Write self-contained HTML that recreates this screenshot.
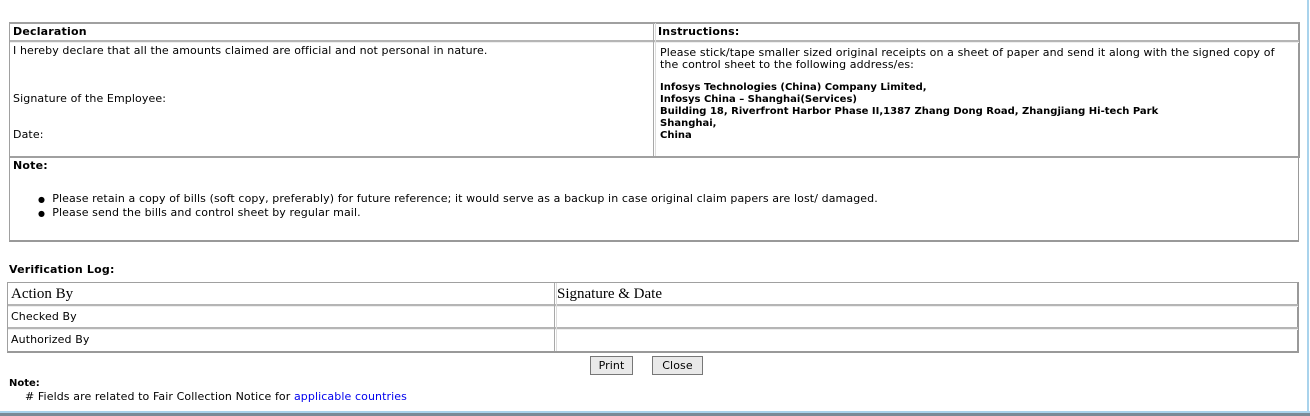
<!DOCTYPE html>
<html><head><style>
body{margin:0;width:1310px;height:416px;background:#fff;position:relative;overflow:hidden;font-family:"DejaVu Sans","Liberation Sans",sans-serif;font-size:11px;letter-spacing:0.1px;color:#000}
.a{position:absolute;white-space:nowrap}
.box{position:absolute;border:1px solid #a0a0a0;border-right-color:#999;border-bottom-color:#999;box-sizing:border-box}
.hl{position:absolute;height:2px;background:#b5b5b5;border-bottom:1px solid #eee}
.vl{position:absolute;width:1px;background:#a8a8a8}
.bd{font-weight:bold;font-size:10px;letter-spacing:0}
.btn{position:absolute;border:1px solid #777;background:#e9e9e9;box-sizing:border-box;text-align:center;line-height:17px;font-size:11px}
.serif{font-family:"Liberation Serif",serif;font-size:15px;letter-spacing:0}
.h{font-weight:bold;font-size:11px;letter-spacing:0.2px}
</style></head><body>
<div class="box" style="left:9px;top:22px;width:1291px;height:136px;border-width:2px 2px 1px 1px"></div>
<div class="hl" style="left:10px;top:40px;width:1289px"></div>
<div class="vl" style="left:653px;top:23px;height:133px"></div>
<div class="vl" style="left:655px;top:23px;height:133px;background:#ddd"></div>
<div class="a h" style="left:13px;top:25px">Declaration</div>
<div class="a h" style="left:658px;top:25px">Instructions:</div>
<div class="a" style="left:13px;top:44px">I hereby declare that all the amounts claimed are official and not personal in nature.</div>
<div class="a" style="left:13px;top:92px">Signature of the Employee:</div>
<div class="a" style="left:13px;top:128px">Date:</div>
<div class="a" style="left:660px;top:47px;line-height:12px">Please stick/tape smaller sized original receipts on a sheet of paper and send it along with the signed copy of<br>the control sheet to the following address/es:</div>
<div class="a bd" style="left:660px;top:82px;line-height:12px">Infosys Technologies (China) Company Limited,<br>Infosys China – Shanghai(Services)<br>Building 18, Riverfront Harbor Phase II,1387 Zhang Dong Road, Zhangjiang Hi-tech Park<br>Shanghai,<br>China</div>
<div class="box" style="left:9px;top:156px;width:1290px;height:86px;border-width:2px 1px 2px 1px"></div>
<div class="a h" style="left:13px;top:159px">Note:</div>
<div class="a" style="left:38px;top:192px;line-height:13px"><span style="font-size:8px">●</span>&nbsp;&nbsp;Please retain a copy of bills (soft copy, preferably) for future reference; it would serve as a backup in case original claim papers are lost/ damaged.<br><span style="font-size:8px">●</span>&nbsp;&nbsp;Please send the bills and control sheet by regular mail.</div>
<div class="a h" style="left:9px;top:263px">Verification Log:</div>
<div class="box" style="left:7px;top:282px;width:1292px;height:71px;border-width:1px 2px 2px 1px"></div>
<div class="hl" style="left:8px;top:304px;width:1290px"></div>
<div class="hl" style="left:8px;top:327px;width:1290px"></div>
<div class="vl" style="left:554px;top:283px;height:68px"></div>
<div class="vl" style="left:556px;top:283px;height:68px;background:#ddd"></div>
<div class="a serif" style="left:11px;top:286px">Action By</div>
<div class="a serif" style="left:557px;top:286px">Signature &amp; Date</div>
<div class="a" style="left:11px;top:310px">Checked By</div>
<div class="a" style="left:11px;top:333px">Authorized By</div>
<div class="btn" style="left:590px;top:356px;width:43px;height:19px">Print</div>
<div class="btn" style="left:652px;top:356px;width:51px;height:19px">Close</div>
<div class="a" style="left:9px;top:378px;font-weight:bold;font-size:10px;letter-spacing:0">Note:</div>
<div class="a" style="left:25px;top:390px">#&nbsp;Fields are related to Fair Collection Notice for <span style="color:#0000ee">applicable countries</span></div>
<div style="position:absolute;left:1307px;top:0;width:2px;height:416px;background:#a9d3ec"></div>
<div style="position:absolute;left:0;top:411px;width:1310px;height:2px;background:#a9d3ec"></div>
<div style="position:absolute;left:0;top:413px;width:1310px;height:3px;background:#7a8a96"></div>
</body></html>
